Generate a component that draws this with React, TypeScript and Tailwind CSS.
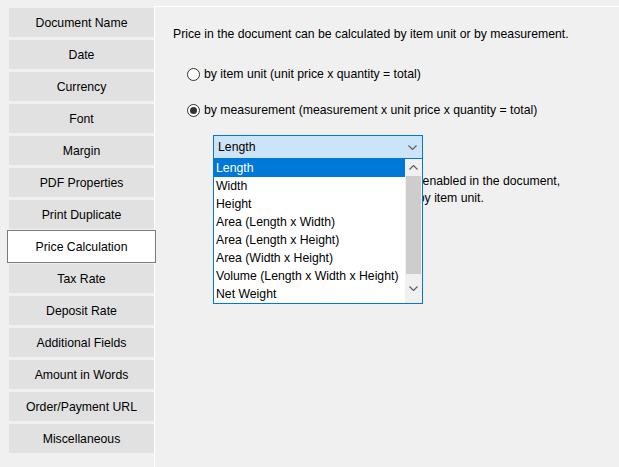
import React from 'react';

const sections = [
    'Document Name',
    'Date',
    'Currency',
    'Font',
    'Margin',
    'PDF Properties',
    'Print Duplicate',
    'Price Calculation',
    'Tax Rate',
    'Deposit Rate',
    'Additional Fields',
    'Amount in Words',
    'Order/Payment URL',
    'Miscellaneous',
];

const measurements = [
    'Length',
    'Width',
    'Height',
    'Area (Length x Width)',
    'Area (Length x Height)',
    'Area (Width x Height)',
    'Volume (Length x Width x Height)',
    'Net Weight',
];

const Chevron = ({ up = false }: { up?: boolean }) => (
    <svg width="9" height="5" viewBox="0 0 9 5" className="block">
        <polyline
            points={up ? '0.5,4.5 4.5,0.5 8.5,4.5' : '0.5,0.5 4.5,4.5 8.5,0.5'}
            fill="none"
            stroke="#606060"
            strokeWidth="1.2"
        />
    </svg>
);

const Radio = ({ checked, label }: { checked: boolean; label: string }) => (
    <div className="flex items-center h-[16px] ml-[14px]">
        <span className="w-[13px] h-[13px] rounded-full border border-[#333333] bg-white flex items-center justify-center">
            {checked && <span className="w-[7px] h-[7px] rounded-full bg-[#333333]" />}
        </span>
        <span className="ml-[4px]">{label}</span>
    </div>
);

export default function App() {
    const selected = 'Price Calculation';

    return (
        <div className="flex h-[467px] w-[619px] overflow-hidden bg-[#f0f0f0] text-[12.25px] text-black font-['Liberation_Sans',Arial,sans-serif]">
            {/* Section list */}
            <div className="w-[154px] shrink-0 pl-[9px] pt-[8px] flex flex-col gap-[3px]">
                {sections.map((name) =>
                    name === selected ? (
                        <div
                            key={name}
                            className="relative z-10 h-[33px] -my-[2px] -mx-[2px] pt-px flex items-center justify-center bg-white border border-[#7a7a7a]"
                        >
                            {name}
                        </div>
                    ) : (
                        <div key={name} className="h-[29px] pt-px flex items-center justify-center bg-[#e1e1e1]">
                            {name}
                        </div>
                    )
                )}
            </div>

            {/* Settings pane */}
            <div className="flex-1 mt-[6px] border-l border-t border-white pl-[18px] pt-[19px]">
                <p className="leading-[16px]">
                    Price in the document can be calculated by item unit or by measurement.
                </p>

                <div className="mt-[24px]">
                    <Radio checked={false} label="by item unit (unit price x quantity = total)" />
                </div>
                <div className="mt-[20px]">
                    <Radio checked label="by measurement (measurement x unit price x quantity = total)" />
                </div>

                <div className="relative mt-[17px] ml-[40px] w-[210px]">
                    <div className="h-[24px] border border-[#0078d7] bg-[#cce4f7] flex items-center justify-between pl-[4px] pr-[5px]">
                        <span>Length</span>
                        <Chevron />
                    </div>

                    <div className="absolute left-0 top-[23px] w-full h-[146px] border border-[#0078d7] bg-white flex z-20">
                        <div className="flex-1 flex flex-col">
                            {measurements.map((m, i) => (
                                <div
                                    key={m}
                                    className={`h-[18px] leading-[18px] pl-[2px] whitespace-nowrap ${
                                        i === 0 ? 'bg-[#0078d7] text-white' : ''
                                    }`}
                                >
                                    {m}
                                </div>
                            ))}
                        </div>
                        <div className="w-[17px] bg-[#f0f0f0] flex flex-col items-center">
                            <div className="h-[17px] flex items-center justify-center">
                                <Chevron up />
                            </div>
                            <div className="w-[15px] h-[98px] bg-[#cdcdcd]" />
                            <div className="flex-1 flex items-center justify-center">
                                <Chevron />
                            </div>
                        </div>
                    </div>
                </div>

                <div className="mt-[14px] ml-[46px] leading-[17px] whitespace-nowrap">
                    <div>When the measurement option is not enabled in the document,</div>
                    <div>the prices of items will be calculated by item unit.</div>
                </div>
            </div>
        </div>
    );
}
